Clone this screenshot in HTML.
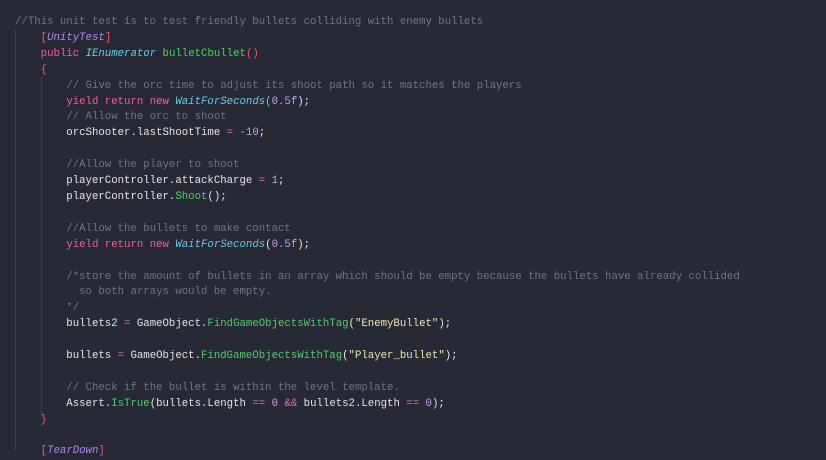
<!DOCTYPE html>
<html><head><meta charset="utf-8"><style>
html,body{margin:0;padding:0;background:#262833;width:826px;height:451px;overflow:hidden}
pre{margin:0;position:absolute;left:15px;top:15px;font-family:"Liberation Mono",monospace;font-size:10.7px;line-height:15.9px;color:#e6e6e6;white-space:pre}
.c{color:#6e7585}.k{color:#ec5fa6}.t{color:#6ec8e8;font-style:italic}.m{color:#4fce6a}
.n{color:#c6a0f0}.s{color:#f0e6b0}.b{color:#f05a7a}.p{color:#f07ab0}.o{color:#e86ab0}
.g{position:absolute;width:1px;background:#3a3d48}
</style></head><body>
<div class="g" style="left:15px;top:29px;height:422px"></div>
<div class="g" style="left:41px;top:77px;height:340px"></div>
<pre><span class="c">//This unit test is to test friendly bullets colliding with enemy bullets</span>
    <span class="b">[</span><span class="t" style="color:#b088f0">UnityTest</span><span class="b">]</span>
    <span class="k">public</span> <span class="t">IEnumerator</span> <span class="m">bulletCbullet</span><span class="b">()</span>
    <span class="b">{</span>
        <span class="c">// Give the orc time to adjust its shoot path so it matches the players</span>
        <span class="k">yield return new</span> <span class="t">WaitForSeconds</span><span class="b" style="color:#6ec8e8">(</span><span class="n">0.5f</span>);
        <span class="c">// Allow the orc to shoot</span>
        orcShooter.lastShootTime <span class="o">=</span> <span class="n">-10</span>;

        <span class="c">//Allow the player to shoot</span>
        playerController.attackCharge <span class="o">=</span> <span class="n">1</span>;
        playerController.<span class="m">Shoot</span>();

        <span class="c">//Allow the bullets to make contact</span>
        <span class="k">yield return new</span> <span class="t">WaitForSeconds</span>(<span class="n">0.5f</span>);

        <span class="c">/*store the amount of bullets in an array which should be empty because the bullets have already collided
          so both arrays would be empty.
        */</span>
        bullets2 <span class="o">=</span> GameObject.<span class="m">FindGameObjectsWithTag</span>(<span class="s">"EnemyBullet"</span>);

        bullets <span class="o">=</span> GameObject.<span class="m">FindGameObjectsWithTag</span>(<span class="s">"Player_bullet"</span>);

        <span class="c">// Check if the bullet is within the level template.</span>
        Assert.<span class="m">IsTrue</span>(bullets.Length <span class="o">==</span> <span class="n">0</span> <span class="o">&amp;&amp;</span> bullets2.Length <span class="o">==</span> <span class="n">0</span>);
    <span class="b">}</span>

    <span class="b">[</span><span class="t" style="color:#b088f0">TearDown</span><span class="b">]</span></pre>
</body></html>
